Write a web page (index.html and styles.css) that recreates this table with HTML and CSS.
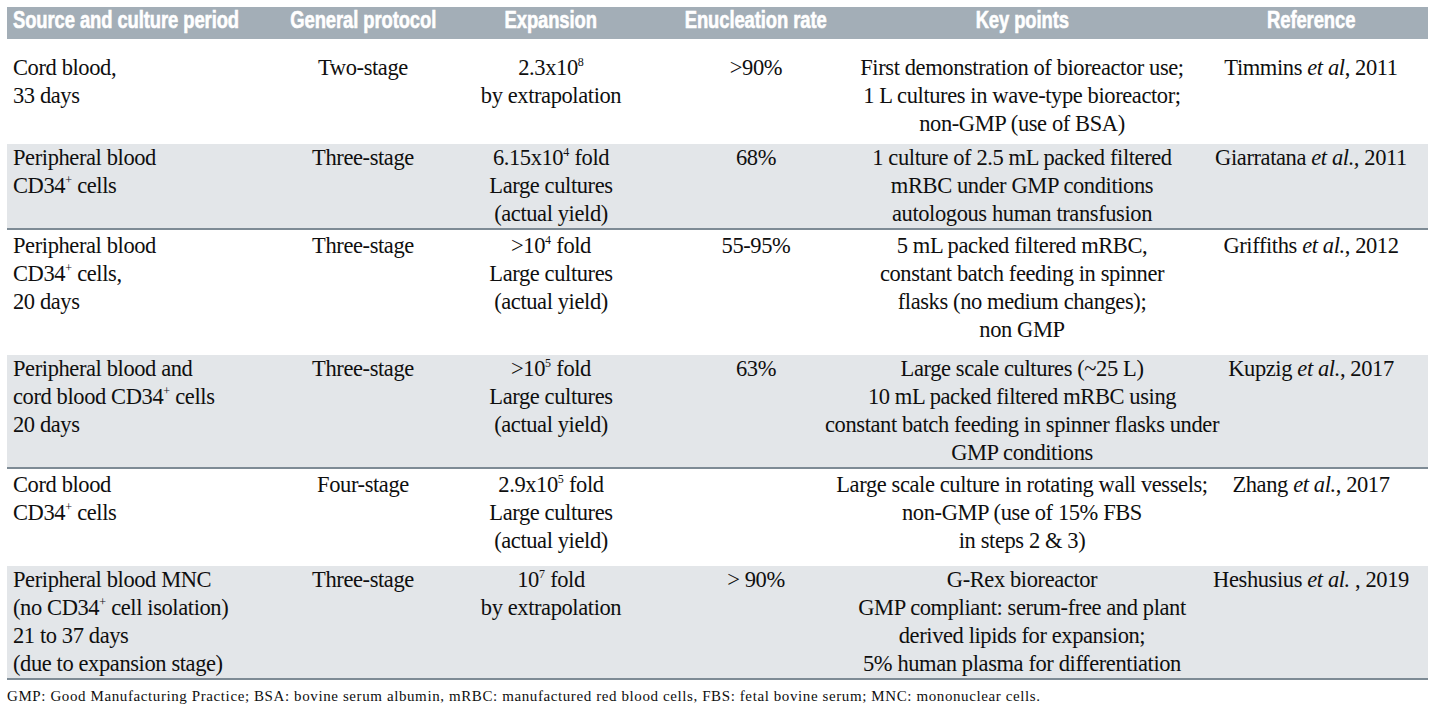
FILE: index.html
```html
<!DOCTYPE html>
<html>
<head>
<meta charset="utf-8">
<link rel="stylesheet" href="styles.css">
</head>
<body>
<div class="table">
  <div class="row head">
    <div class="cell left"><span class="hd">Source and culture period</span></div>
    <div class="cell ctr"><span class="hd">General protocol</span></div>
    <div class="cell ctr"><span class="hd">Expansion</span></div>
    <div class="cell ctr"><span class="hd">Enucleation rate</span></div>
    <div class="cell ctr"><span class="hd">Key points</span></div>
    <div class="cell ctr"><span class="hd">Reference</span></div>
  </div>

  <div class="row first">
    <div class="cell left">Cord blood,<br>33 days</div>
    <div class="cell ctr"><div>Two-stage</div></div>
    <div class="cell ctr"><div>2.3x10<sup>8</sup><br>by extrapolation</div></div>
    <div class="cell ctr"><div>&gt;90%</div></div>
    <div class="cell ctr"><div>First demonstration of bioreactor use;<br>1 L cultures in wave-type bioreactor;<br>non-GMP (use of BSA)</div></div>
    <div class="cell ctr"><div>Timmins <i>et al</i>, 2011</div></div>
  </div>

  <div class="row alt">
    <div class="cell left">Peripheral blood<br>CD34<sup>+</sup> cells</div>
    <div class="cell ctr"><div>Three-stage</div></div>
    <div class="cell ctr"><div>6.15x10<sup>4</sup> fold<br>Large cultures<br>(actual yield)</div></div>
    <div class="cell ctr"><div>68%</div></div>
    <div class="cell ctr"><div>1 culture of 2.5 mL packed filtered<br>mRBC under GMP conditions<br>autologous human transfusion</div></div>
    <div class="cell ctr"><div>Giarratana <i>et al.,</i> 2011</div></div>
  </div>

  <div class="row">
    <div class="cell left">Peripheral blood<br>CD34<sup>+</sup> cells,<br>20 days</div>
    <div class="cell ctr"><div>Three-stage</div></div>
    <div class="cell ctr"><div>&gt;10<sup>4</sup> fold<br>Large cultures<br>(actual yield)</div></div>
    <div class="cell ctr"><div>55-95%</div></div>
    <div class="cell ctr"><div>5 mL packed filtered mRBC,<br>constant batch feeding in spinner<br>flasks (no medium changes);<br>non GMP</div></div>
    <div class="cell ctr"><div>Griffiths <i>et al.</i>, 2012</div></div>
  </div>

  <div class="row alt">
    <div class="cell left">Peripheral blood and<br>cord blood CD34<sup>+</sup> cells<br>20 days</div>
    <div class="cell ctr"><div>Three-stage</div></div>
    <div class="cell ctr"><div>&gt;10<sup>5</sup> fold<br>Large cultures<br>(actual yield)</div></div>
    <div class="cell ctr"><div>63%</div></div>
    <div class="cell ctr"><div>Large scale cultures (~25 L)<br>10 mL packed filtered mRBC using<br>constant batch feeding in spinner flasks under<br>GMP conditions</div></div>
    <div class="cell ctr"><div>Kupzig <i>et al.</i>, 2017</div></div>
  </div>

  <div class="row">
    <div class="cell left">Cord blood<br>CD34<sup>+</sup> cells</div>
    <div class="cell ctr"><div>Four-stage</div></div>
    <div class="cell ctr"><div>2.9x10<sup>5</sup> fold<br>Large cultures<br>(actual yield)</div></div>
    <div class="cell ctr"><div></div></div>
    <div class="cell ctr"><div>Large scale culture in rotating wall vessels;<br>non-GMP (use of 15% FBS<br>in steps 2 &amp; 3)</div></div>
    <div class="cell ctr"><div>Zhang <i>et al.</i>, 2017</div></div>
  </div>

  <div class="row alt">
    <div class="cell left">Peripheral blood MNC<br>(no CD34<sup>+</sup> cell isolation)<br>21 to 37 days<br>(due to expansion stage)</div>
    <div class="cell ctr"><div>Three-stage</div></div>
    <div class="cell ctr"><div>10<sup>7</sup> fold<br>by extrapolation</div></div>
    <div class="cell ctr"><div>&gt; 90%</div></div>
    <div class="cell ctr"><div>G-Rex bioreactor<br>GMP compliant: serum-free and plant<br>derived lipids for expansion;<br>5% human plasma for differentiation</div></div>
    <div class="cell ctr"><div>Heshusius <i>et al.</i> , 2019</div></div>
  </div>

  <p class="note">GMP: Good Manufacturing Practice; BSA: bovine serum albumin, mRBC: manufactured red blood cells, FBS: fetal bovine serum; MNC: mononuclear cells.</p>
</div>
</body>
</html>
```

FILE: styles.css
```css
html, body {
  margin: 0;
  padding: 0;
  background: #ffffff;
}

body {
  font-family: "Liberation Serif", "Times New Roman", serif;
  color: #0f0f0f;
}

.table {
  width: 1421px;
  margin: 7px 0 0 7px;
}

.row {
  display: grid;
  grid-template-columns: 279px 154px 222px 188px 344px 234px;
  font-size: 22.5px;
  letter-spacing: -0.4px;
  line-height: 28px;
  padding: 2px 0 11px;
}

.row.first {
  padding: 15px 0 6px;
}

.row.alt {
  background: #e3e6e9;
  padding: 0;
  border-bottom: 2px solid #7e8b95;
}

.row.head {
  background: #a3aeb7;
  color: #ffffff;
  font-family: "Liberation Sans", Arial, sans-serif;
  font-weight: bold;
  font-size: 23px;
  letter-spacing: -0.1px;
  line-height: 27px;
  height: 32px;
  padding: 0;
}

.hd {
  display: inline-block;
  transform: scaleX(0.8);
  transform-origin: center;
  -webkit-text-stroke: 0.6px #ffffff;
}

.cell.left .hd {
  transform-origin: left center;
}

.cell {
  white-space: nowrap;
  min-width: 0;
}

.cell.left {
  padding-left: 6px;
}

.cell.ctr {
  display: flex;
  justify-content: center;
  text-align: center;
}

sup {
  font-size: 12px;
  line-height: 0;
  vertical-align: 9px;
  letter-spacing: 0;
}

i {
  font-style: italic;
}

.note {
  margin: 7px 0 0;
  font-size: 15px;
  letter-spacing: 0.6px;
  line-height: 18px;
  white-space: nowrap;
}
```
